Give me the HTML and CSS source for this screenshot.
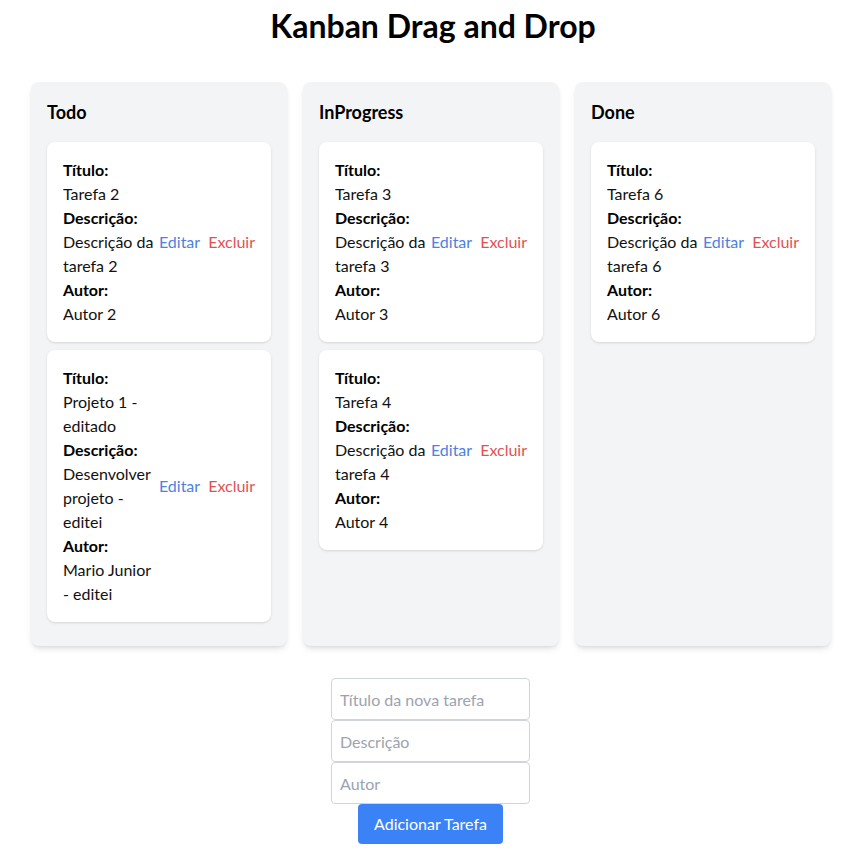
FILE: index.html
```html
<!DOCTYPE html>
<html lang="pt">
<head>
<meta charset="utf-8">
<title>Kanban Drag and Drop</title>
<link rel="stylesheet" href="styles.css">
</head>
<body>
<div class="app">
  <h1 class="title">Kanban Drag and Drop</h1>
  <div class="board">
    <div class="column">
      <h2 class="column-title">Todo</h2>
      <div class="card">
        <div class="card-text">
          <div class="label">Título:</div>
          <div>Tarefa 2</div>
          <div class="label">Descrição:</div>
          <div>Descrição da tarefa 2</div>
          <div class="label">Autor:</div>
          <div>Autor 2</div>
        </div>
        <div class="actions"><button class="btn-link edit">Editar</button><button class="btn-link delete">Excluir</button></div>
      </div>
      <div class="card">
        <div class="card-text">
          <div class="label">Título:</div>
          <div>Projeto 1 - editado</div>
          <div class="label">Descrição:</div>
          <div>Desenvolver projeto - editei</div>
          <div class="label">Autor:</div>
          <div>Mario Junior - editei</div>
        </div>
        <div class="actions"><button class="btn-link edit">Editar</button><button class="btn-link delete">Excluir</button></div>
      </div>
    </div>
    <div class="column">
      <h2 class="column-title">InProgress</h2>
      <div class="card">
        <div class="card-text">
          <div class="label">Título:</div>
          <div>Tarefa 3</div>
          <div class="label">Descrição:</div>
          <div>Descrição da tarefa 3</div>
          <div class="label">Autor:</div>
          <div>Autor 3</div>
        </div>
        <div class="actions"><button class="btn-link edit">Editar</button><button class="btn-link delete">Excluir</button></div>
      </div>
      <div class="card">
        <div class="card-text">
          <div class="label">Título:</div>
          <div>Tarefa 4</div>
          <div class="label">Descrição:</div>
          <div>Descrição da tarefa 4</div>
          <div class="label">Autor:</div>
          <div>Autor 4</div>
        </div>
        <div class="actions"><button class="btn-link edit">Editar</button><button class="btn-link delete">Excluir</button></div>
      </div>
    </div>
    <div class="column">
      <h2 class="column-title">Done</h2>
      <div class="card">
        <div class="card-text">
          <div class="label">Título:</div>
          <div>Tarefa 6</div>
          <div class="label">Descrição:</div>
          <div>Descrição da tarefa 6</div>
          <div class="label">Autor:</div>
          <div>Autor 6</div>
        </div>
        <div class="actions"><button class="btn-link edit">Editar</button><button class="btn-link delete">Excluir</button></div>
      </div>
    </div>
  </div>
  <form class="new-task" onsubmit="return false">
    <input class="field" type="text" placeholder="Título da nova tarefa">
    <input class="field" type="text" placeholder="Descrição">
    <input class="field" type="text" placeholder="Autor">
    <button class="add-btn" type="submit">Adicionar Tarefa</button>
  </form>
</div>
</body>
</html>
```

FILE: styles.css
```css
* { box-sizing: border-box; }
html, body { margin: 0; padding: 0; background: #ffffff; }
body {
  font-family: Lato, "Liberation Sans", Arial, sans-serif;
  font-size: 16px;
  line-height: 24px;
  color: #111111;
}
.app { padding-top: 8px; }
.title {
  margin: 0 0 38px 0;
  padding-left: 2px;
  text-align: center;
  font-size: 32px;
  line-height: 36px;
  font-weight: 700;
  color: #000;
}
.board {
  display: flex;
  justify-content: center;
  gap: 16px;
  padding-right: 2px;
}
.column {
  width: 256px;
  background: #f3f4f6;
  border-radius: 8px;
  padding: 16px;
  box-shadow: 0 4px 6px -1px rgba(0,0,0,0.1), 0 2px 4px -2px rgba(0,0,0,0.1);
}
.column-title {
  margin: 0 0 16px 0;
  font-size: 18px;
  line-height: 28px;
  font-weight: 700;
  color: #000;
}
.card {
  display: flex;
  align-items: center;
  background: #fff;
  border-radius: 8px;
  padding: 16px;
  margin-bottom: 8px;
  box-shadow: 0 1px 3px 0 rgba(0,0,0,0.1), 0 1px 2px -1px rgba(0,0,0,0.1);
}
.card-text { flex: 1 1 auto; min-width: 0; }
.label { font-weight: 700; color: #000; }
.actions { display: flex; gap: 8px; flex-shrink: 0; }
.btn-link {
  background: none;
  border: 0;
  padding: 0;
  font: inherit;
  line-height: 24px;
  cursor: pointer;
}
.edit { color: #4f7fe0; }
.delete { color: #e05252; }
.new-task {
  display: flex;
  flex-direction: column;
  align-items: center;
  margin-top: 32px;
  padding-right: 3px;
}
.field {
  width: 199px;
  height: 42px;
  padding: 8px;
  border: 1px solid #d1d5db;
  border-radius: 4px;
  font: inherit;
  line-height: 24px;
  color: #111;
}
.field::placeholder { color: #9ca3af; }
.add-btn {
  background: #3b82f6;
  color: #fff;
  border: 0;
  border-radius: 4px;
  padding: 8px 16px;
  font: inherit;
  line-height: 24px;
  cursor: pointer;
}
```
